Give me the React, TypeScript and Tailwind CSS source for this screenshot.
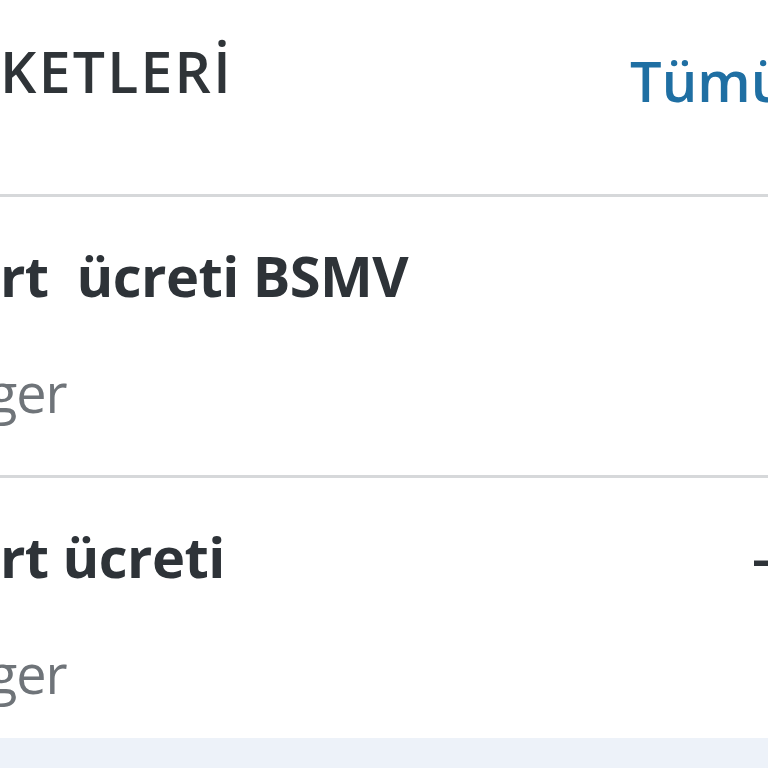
export default function App() {
  const rows = [
    { title: 'rt\u00a0 ücreti BSMV', sub: 'ger', amount: '', h: 'h-[281px] border-b-[3px]' },
    { title: 'rt ücreti', sub: 'ger', amount: '-', h: 'h-[260px]' },
  ];

  return (
    <div className="w-[768px] h-[768px] overflow-hidden bg-white flex flex-col font-['Open_Sans',sans-serif]">
      <div className="h-[197px] shrink-0 flex items-start border-b-[3px] border-[#d6d8da]">
        <h2 className="w-[630px] shrink-0 pt-[35px] text-[57px] leading-[72px] font-semibold tracking-[0.04em] text-[#2f3438] whitespace-nowrap">
          KETLERİ
        </h2>
        <a className="pt-[44px] text-[56px] leading-[72px] font-semibold text-[#1f6fa3] whitespace-nowrap">Tümü</a>
      </div>
      {rows.map((r, i) => (
        <div key={i} className={`${r.h} shrink-0 flex border-[#d6d8da]`}>
          <div className="w-[752px] shrink-0 flex flex-col pt-[42px]">
            <span className="text-[56px] leading-[72px] font-bold tracking-[-0.01em] text-[#2e3338] whitespace-nowrap">
              {r.title}
            </span>
            <span className="-ml-[12px] mt-[45px] text-[54px] leading-[72px] tracking-[-0.02em] text-[#6f7479] whitespace-nowrap">
              {r.sub}
            </span>
          </div>
          <span className="pt-[42px] text-[56px] leading-[72px] font-semibold text-[#2e3338]">{r.amount}</span>
        </div>
      ))}
      <div className="flex-1 bg-[#edf2f9]" />
    </div>
  );
}
